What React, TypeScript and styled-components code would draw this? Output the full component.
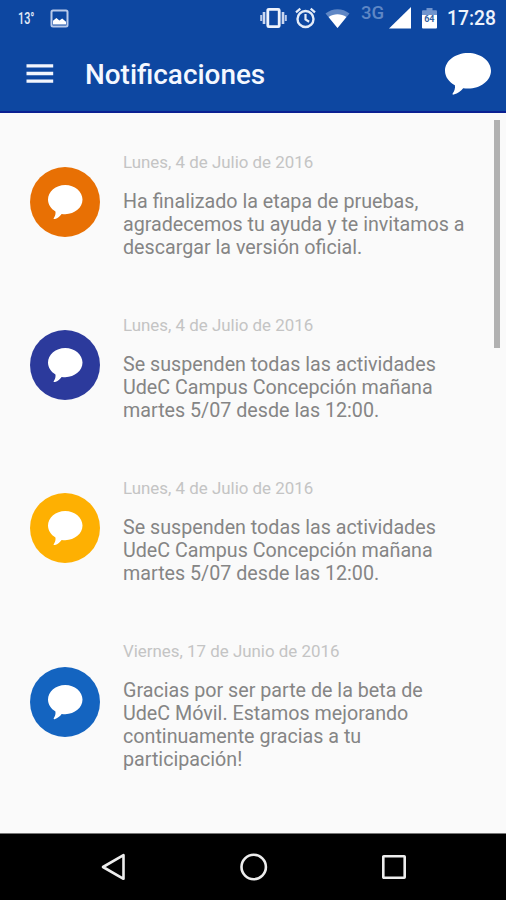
import React from 'react';
import styled, { createGlobalStyle } from 'styled-components';

const GlobalStyle = createGlobalStyle`
  * { box-sizing: border-box; }
  body { margin: 0; background: #fafafa; font-family: Roboto, "Noto Sans", sans-serif; }
`;

const Screen = styled.div`
  width: 506px;
  height: 900px;
  display: flex;
  flex-direction: column;
  background: #fafafa;
  overflow: hidden;
`;

const StatusBar = styled.div`
  height: 36px;
  flex: none;
  display: flex;
  align-items: center;
  justify-content: space-between;
  padding: 0 9px 0 18px;
  background: #0d47a1;
`;

const StatusGroup = styled.div`
  display: flex;
  align-items: center;
  height: 36px;
`;

const Temperature = styled.span`
  width: 32px;
  font-size: 17px;
  line-height: 36px;
  font-weight: 500;
  color: #e4ecf8;
  white-space: nowrap;
  transform: scaleX(0.64);
  transform-origin: left center;
`;

const Network = styled.span`
  width: 24px;
  height: 36px;
  margin-left: 11px;
  padding-top: 3px;
  font-size: 18.5px;
  line-height: 20px;
  font-weight: 500;
  color: #5f87c5;
`;

const Clock = styled.time`
  width: 50px;
  margin-left: 10px;
  font-size: 19.3px;
  line-height: 37px;
  font-weight: 500;
  color: #eef3fc;
  white-space: nowrap;
`;

const StatusIcon = styled.svg<{ $gap?: number }>`
  display: block;
  flex: none;
  margin-left: ${({ $gap = 0 }) => $gap}px;
`;

const Toolbar = styled.header`
  height: 77px;
  flex: none;
  display: flex;
  align-items: center;
  padding: 0 15px 0 26px;
  background: #0d47a1;
  border-bottom: 2px solid #0a2092;
`;

const MenuButton = styled.button`
  display: flex;
  width: 28px;
  padding: 0;
  margin: 0 31px 0 0;
  border: 0;
  background: none;
`;

const Title = styled.h1`
  flex: 1;
  margin: 0;
  padding-top: 2px;
  font-size: 27.9px;
  line-height: 36px;
  font-weight: 500;
  color: #f4f8ff;
`;

const Content = styled.main`
  flex: 1;
  display: flex;
  justify-content: space-between;
  align-items: flex-start;
  padding: 7px 6px 0 30px;
`;

const List = styled.ul`
  margin: 0;
  padding: 0;
  list-style: none;
`;

const Item = styled.li`
  display: flex;
  align-items: center;
  gap: 23px;
`;

const Avatar = styled.div<{ $color: string }>`
  width: 70px;
  height: 70px;
  flex: none;
  display: flex;
  align-items: flex-start;
  padding: 18px 0 0 18px;
  border-radius: 50%;
  background: ${({ $color }) => $color};
`;

const Message = styled.div`
  padding: 32px 0 24px;
`;

const DateLabel = styled.div`
  height: 38px;
  font-size: 16.9px;
  line-height: 20px;
  color: #c4c4c4;
`;

const Line = styled.div`
  font-size: 19.7px;
  line-height: 23px;
  color: #858585;
  white-space: nowrap;
`;

const ScrollThumb = styled.div`
  width: 6px;
  height: 228px;
  background: #b1b1b1;
`;

const NavBar = styled.nav`
  height: 67px;
  flex: none;
  display: flex;
  align-items: center;
  justify-content: space-between;
  padding: 0 99px 0 100px;
  background: #000;
  border-top: 1px solid #777;
`;

function Bubble({ width, height }: { width: number; height: number }) {
  return (
    <svg width={width} height={height} viewBox="0 0 46 42" preserveAspectRatio="none">
      <path
        fill="#fff"
        d="M23 0C10.300 0 0 8 0 17.800c0 6 3.900 11.300 9.900 14.500.5 2.800-.4 5.700-2.100 8-.6.9-.2 1.700.9 1.300 4.300-1.300 7.200-3.500 9.500-6.400 1.500.3 3.200.4 4.800.4 12.700 0 23-8 23-17.800S35.700 0 23 0Z"
      />
    </svg>
  );
}

interface Notification {
  color: string;
  date: string;
  lines: string[];
}

const suspended = [
  'Se suspenden todas las actividades',
  'UdeC Campus Concepción mañana',
  'martes 5/07 desde las 12:00.',
];

const notifications: Notification[] = [
  {
    color: '#e87004',
    date: 'Lunes, 4 de Julio de 2016',
    lines: [
      'Ha finalizado la etapa de pruebas,',
      'agradecemos tu ayuda y te invitamos a',
      'descargar la versión oficial.',
    ],
  },
  { color: '#2c3a9c', date: 'Lunes, 4 de Julio de 2016', lines: suspended },
  { color: '#feb002', date: 'Lunes, 4 de Julio de 2016', lines: suspended },
  {
    color: '#1464c0',
    date: 'Viernes, 17 de Junio de 2016',
    lines: [
      'Gracias por ser parte de la beta de',
      'UdeC Móvil. Estamos mejorando',
      'continuamente gracias a tu',
      'participación!',
    ],
  },
];

export default function App() {
  return (
    <Screen>
      <GlobalStyle />
      <StatusBar>
        <StatusGroup>
          <Temperature>13°</Temperature>
          <StatusIcon width="19" height="19" viewBox="0 0 19 19">
            <rect x="1.500" y="1.500" width="16" height="16" rx="1.500" fill="none" stroke="#b9caea" strokeWidth="2" />
            <path d="M3 15.500v-3.800l3.400-2.600 3 2.300 2.800-1.900 3.800 3.200v2.800Z" fill="#fff" />
          </StatusIcon>
        </StatusGroup>
        <StatusGroup>
          <StatusIcon width="27" height="22" viewBox="0 0 27 22">
            <rect x="7.800" y="2.300" width="11.400" height="17.400" rx="1" fill="none" stroke="#eef3fc" strokeWidth="2.800" />
            <path d="M4 5v12M23 5v12" stroke="#cbd8f0" strokeWidth="2.600" />
            <path d="M1.200 8v6M25.800 8v6" stroke="#b9caea" strokeWidth="2" />
          </StatusIcon>
          <StatusIcon $gap={8} width="21" height="22" viewBox="0 0 21 22">
            <circle cx="10.500" cy="12" r="8" fill="none" stroke="#e4ecf8" strokeWidth="2.400" />
            <path d="M10.500 7v5.500l3.600 2.300M1 5.300l4.300-3.700M20 5.300l-4.300-3.700" fill="none" stroke="#e4ecf8" strokeWidth="2.200" />
          </StatusIcon>
          <StatusIcon $gap={9} width="25" height="21" viewBox="0 0 25 21">
            <path d="M.5 5.500C7.500-.3 17.500-.3 24.500 5.500L12.500 20Z" fill="#5f87c5" />
            <path d="M3.600 9C9 5.200 16 5.200 21.400 9L12.500 20Z" fill="#fff" />
          </StatusIcon>
          <Network>3G</Network>
          <StatusIcon $gap={4} width="22" height="22" viewBox="0 0 22 22">
            <path d="M22 0v21.500H0Z" fill="#fff" />
          </StatusIcon>
          <StatusIcon $gap={11} width="15" height="21" viewBox="0 0 15 21">
            <path d="M4.500 0h6v2.300H14q1 0 1 1V8H0V3.300q0-1 1-1h3.500Z" fill="#7094cd" />
            <path d="M0 7h15v12.500q0 1-1 1H1q-1 0-1-1Z" fill="#fff" />
            <text x="2.200" y="13.500" fontSize="9" fontWeight="700" fill="#345f9f">64</text>
          </StatusIcon>
          <Clock>17:28</Clock>
        </StatusGroup>
      </StatusBar>
      <Toolbar>
        <MenuButton aria-label="Menú">
          <svg width="28" height="19" viewBox="0 0 28 19">
            <path d="M.5 1.900h26.700M.5 9.500h26.700M.5 17.100h26.700" stroke="#f3f6fd" strokeWidth="3.300" />
          </svg>
        </MenuButton>
        <Title>Notificaciones</Title>
        <Bubble width={46} height={42} />
      </Toolbar>
      <Content>
        <List>
          {notifications.map((n, i) => (
            <Item key={i}>
              <Avatar $color={n.color}>
                <Bubble width={34.5} height={34.5} />
              </Avatar>
              <Message>
                <DateLabel>{n.date}</DateLabel>
                {n.lines.map((line) => (
                  <Line key={line}>{line}</Line>
                ))}
              </Message>
            </Item>
          ))}
        </List>
        <ScrollThumb />
      </Content>
      <NavBar>
        <svg width="26" height="28" viewBox="0 0 26 28">
          <path d="M23.500 2.200v23.600L3 14Z" fill="none" stroke="#ededed" strokeWidth="2.600" strokeLinejoin="round" />
        </svg>
        <svg width="28" height="28" viewBox="0 0 28 28">
          <circle cx="13.700" cy="14" r="12.200" fill="none" stroke="#ededed" strokeWidth="2.600" />
        </svg>
        <svg width="26" height="26" viewBox="0 0 26 26">
          <rect x="2.300" y="2.300" width="21.400" height="21.400" rx=".5" fill="none" stroke="#ededed" strokeWidth="2.600" />
        </svg>
      </NavBar>
    </Screen>
  );
}
